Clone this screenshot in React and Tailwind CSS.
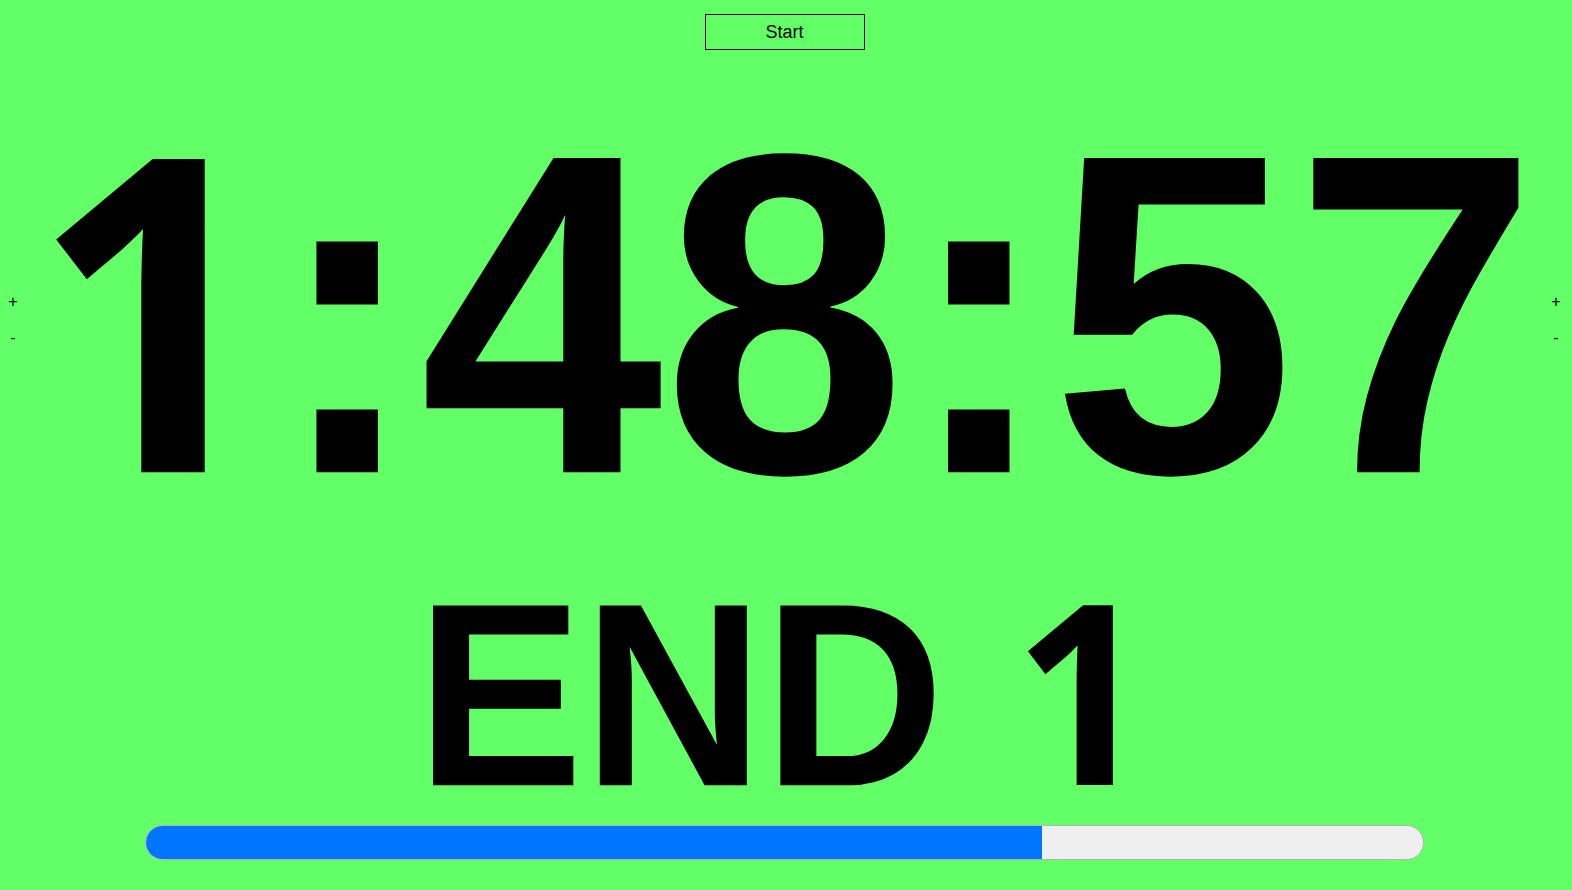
import React from 'react';

const progress = 70.2;

const SideControls = () => (
  <div className="flex w-[26px] flex-col items-center gap-[18px] text-[16px] leading-[18px] text-black">
    <button className="leading-[18px]">+</button>
    <button className="leading-[18px]">-</button>
  </div>
);

// Arial-like "1" without a foot
const One = ({ w }) => (
  <span
    className="inline-block text-left text-[0.96em]"
    style={{ width: w, fontFamily: '"Noto Sans", sans-serif' }}
  >
    1
  </span>
);

export default function App() {
  return (
    <div
      className="h-[890px] w-full overflow-hidden bg-[#62ff66] pr-[3px] text-black"
      style={{ fontFamily: '"Liberation Sans", Arial, sans-serif' }}
    >
      {/* Start button */}
      <div className="flex justify-center pt-[14px]">
        <button className="h-[36px] w-[160px] border border-black bg-transparent text-[18px] leading-none">
          Start
        </button>
      </div>

      {/* Timer */}
      <div className="mt-[50px] flex items-center">
        <SideControls />
        <div className="flex-1 origin-[50%_368px] scale-y-[1.045] text-center text-[437px] font-bold leading-none whitespace-nowrap">
          <One w="243px" />:48:57
        </div>
        <SideControls />
      </div>

      {/* Label */}
      <div className="mt-[33px] origin-[50%_209px] scale-y-[1.045] text-center text-[250px] font-bold leading-none whitespace-nowrap">
        END <One w="139px" />
      </div>

      {/* Progress */}
      <div className="mt-[1px] flex justify-center">
        <div className="h-[35px] w-[1279px] overflow-hidden rounded-full border border-[#b2b2b2] bg-[#efefef]">
          <div className="h-full bg-[#0075ff]" style={{ width: `${progress}%` }} />
        </div>
      </div>
    </div>
  );
}
